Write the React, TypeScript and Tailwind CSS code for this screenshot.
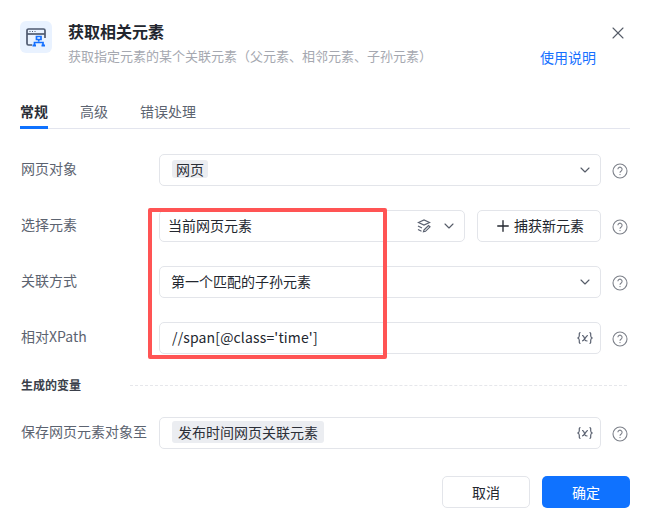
import { ChevronDown, Plus, X } from "lucide-react";
import type { ReactNode } from "react";

const font = { fontFamily: '"Noto Sans CJK SC", "Noto Sans", sans-serif' };

function Help() {
  return (
    <svg width="16" height="16" viewBox="0 0 16 16" fill="none" className="shrink-0 text-[#7d818a] mt-[2px]">
      <circle cx="8" cy="8" r="7" stroke="currentColor" strokeWidth="1.100" />
      <path d="M5.900 6.300a2.100 2.100 0 1 1 3.300 1.700c-.8.5-1.200.9-1.200 1.800" stroke="currentColor" strokeWidth="1.100" />
      <circle cx="8" cy="11.600" r=".7" fill="currentColor" />
    </svg>
  );
}

function VarIcon() {
  return (
    <svg width="16" height="14" viewBox="0 0 16 14" fill="none" stroke="#5a6170" strokeWidth="1.200">
      <path d="M3.500 1.500C2 1.500 2.300 3 2.300 4.500S2 6.500 1 7c1 .5 1.300 1 1.300 2.500s-.3 3 1.200 3" />
      <path d="M12.500 1.500c1.500 0 1.200 1.500 1.200 3s.3 2 1.300 2.500c-1 .5-1.300 1-1.300 2.500s.3 3-1.200 3" />
      <path d="M5 4.500c1.500 0 1.700.5 3 4.500.4 1 1 1 2.500 1M5 10c1.500 0 2-1 3-2.500S9.500 4.500 11 4.500" />
    </svg>
  );
}

function Row({ label, children, mb = "mb-6" }: { label: string; children: ReactNode; mb?: string }) {
  return (
    <div className={`flex items-center h-8 ${mb}`}>
      <div className="w-[138px] shrink-0 text-[14px] leading-[20px] pb-[5px] text-[#5c6370]">{label}</div>
      <div className="flex-1 min-w-0 flex gap-[12px]">{children}</div>
      <div className="w-[29px] shrink-0 flex justify-end pr-[2px]">
        <Help />
      </div>
    </div>
  );
}

function Box({ children, right, left = "pl-[12px]", className = "flex-1" }: { children: ReactNode; right?: ReactNode; left?: string; className?: string }) {
  return (
    <div className={`h-8 border border-[#e3e5ea] rounded-[5px] flex items-center justify-between pr-[7px] text-[14px] text-[#23272f] ${left} ${className}`}>
      <div className="truncate leading-[20px] pb-[2px]">{children}</div>
      {right}
    </div>
  );
}

function Tag({ children, className }: { children: ReactNode; className: string }) {
  return <span className={`block bg-[#ebedf1] rounded-[3px] text-[14px] w-fit text-[#2b2f38] ${className}`}>{children}</span>;
}

export default function App() {
  return (
    <div className="relative w-[645px] h-[521px] bg-white overflow-hidden px-[20px]" style={font}>
      <div className="relative flex pt-[21px] h-[104px]">
        <div className="w-8 h-8 rounded-md bg-[#e9f2ff] flex items-center justify-center shrink-0">
          <svg width="24" height="24" viewBox="0 0 24 24" fill="none">
            <path d="M8 20H4.500A1.500 1.500 0 0 1 3 18.500V5.500A1.500 1.500 0 0 1 4.500 4h15A1.500 1.500 0 0 1 21 5.500V13" stroke="#4f5a70" strokeWidth="1.700" />
            <path d="M3 9h18" stroke="#4f5a70" strokeWidth="1.700" />
            <path d="M5.500 6.500h1M8 6.500h1M10.500 6.500h1" stroke="#4f5a70" strokeWidth="1.200" />
            <path d="M12.500 11.500h4.500v3h-4.500zM14.700 14.500v2M10.500 20v-2.500h8.500V20" stroke="#1570ff" strokeWidth="1.700" />
            <path d="M8.500 19.500h3.500v2H8.500zM17.500 19.500H21v2h-3.500z" fill="#1570ff" />
          </svg>
        </div>
        <div className="ml-4">
          <div className="text-[16px] font-bold leading-[22px] -mt-[1px] text-[#22262e]">获取相关元素</div>
          <div className="text-[13px] leading-[20px] mt-[4px] text-[#a5a8b0]">获取指定元素的某个关联元素（父元素、相邻元素、子孙元素）</div>
        </div>
        <X size={20} strokeWidth={1.300} className="absolute top-[23px] right-[-3px] text-[#565c68]" />
        <span className="absolute top-[47px] right-[29px] text-[14px] leading-[20px] text-[#1570ff]">使用说明</span>
      </div>

      <div className="flex w-[610px] h-[26px] gap-8 border-b border-[#e3e5ee] text-[14px] text-[#5c6370] leading-[17px] -mt-[1px]">
        <div className="h-[26px] border-b-[3px] border-[#0f72ff] font-bold text-[#2b2f38]">常规</div>
        <div>高级</div>
        <div>错误处理</div>
      </div>

      <div className="pt-[25px] w-[610px] pl-px">
        <Row label="网页对象">
          <Box right={<ChevronDown size={16} strokeWidth={1.700} className="text-[#565c68]" />}>
            <Tag className="px-[4px] leading-[18px]">网页</Tag>
          </Box>
        </Row>
        <Row label="选择元素">
          <Box
            left="pl-[8px]"
            right={
              <div className="flex items-center gap-[9px]">
                <svg width="16" height="16" viewBox="0 0 16 16" fill="none" stroke="#5a6170" strokeWidth="1.200">
                  <path d="M2.500 4.500 8 2l5.500 2.500L8 7zM2 8l4 2M2 11.500l3.500 1.800" />
                  <path d="m8 12 4.500-4.500 1.500 1.300-4.500 4.500-2 .4z" />
                </svg>
                <ChevronDown size={16} strokeWidth={1.700} className="text-[#565c68]" />
              </div>
            }
          >
            当前网页元素
          </Box>
          <div className="w-[124px] h-8 shrink-0 border border-[#e3e5ea] rounded-[5px] flex items-center justify-center gap-[2px] text-[14px] text-[#23272f]">
            <Plus size={18} strokeWidth={1.800} />
            <span className="leading-[20px] pb-[2px]">捕获新元素</span>
          </div>
        </Row>
        <Row label="关联方式">
          <Box left="pl-[11px]" right={<ChevronDown size={16} strokeWidth={1.700} className="text-[#565c68]" />}>第一个匹配的子孙元素</Box>
        </Row>
        <Row label="相对XPath" mb="mb-0">
          <Box right={<VarIcon />}><span className="tracking-[0.15px]">//span[@class='time']</span></Box>
        </Row>

        <div className="flex items-center h-[18px] mt-[22px] mb-[23px]">
          <span className="w-[109px] shrink-0 text-[12px] font-bold text-[#3a3f4a]">生成的变量</span>
          <div className="w-[497px] border-t border-dashed border-[#e6e7eb]" />
        </div>

        <Row label="保存网页元素对象至" mb="mb-0">
          <Box right={<VarIcon />}><Tag className="px-[6px] leading-[22px]">发布时间网页关联元素</Tag></Box>
        </Row>
      </div>

      <div className="flex justify-end gap-3 w-[610px] mt-[27px]">
        <button className="w-[88px] h-8 rounded-[5px] border border-[#e3e5ea] text-[14px] text-[#23272f]">取消</button>
        <button className="w-[88px] h-8 rounded-[5px] bg-[#0f72ff] text-[14px] text-white">确定</button>
      </div>

      <div className="absolute left-[148px] top-[208px] w-[239px] h-[151px] border-[4px] border-[#ff5454] rounded-[2px]" />
    </div>
  );
}
